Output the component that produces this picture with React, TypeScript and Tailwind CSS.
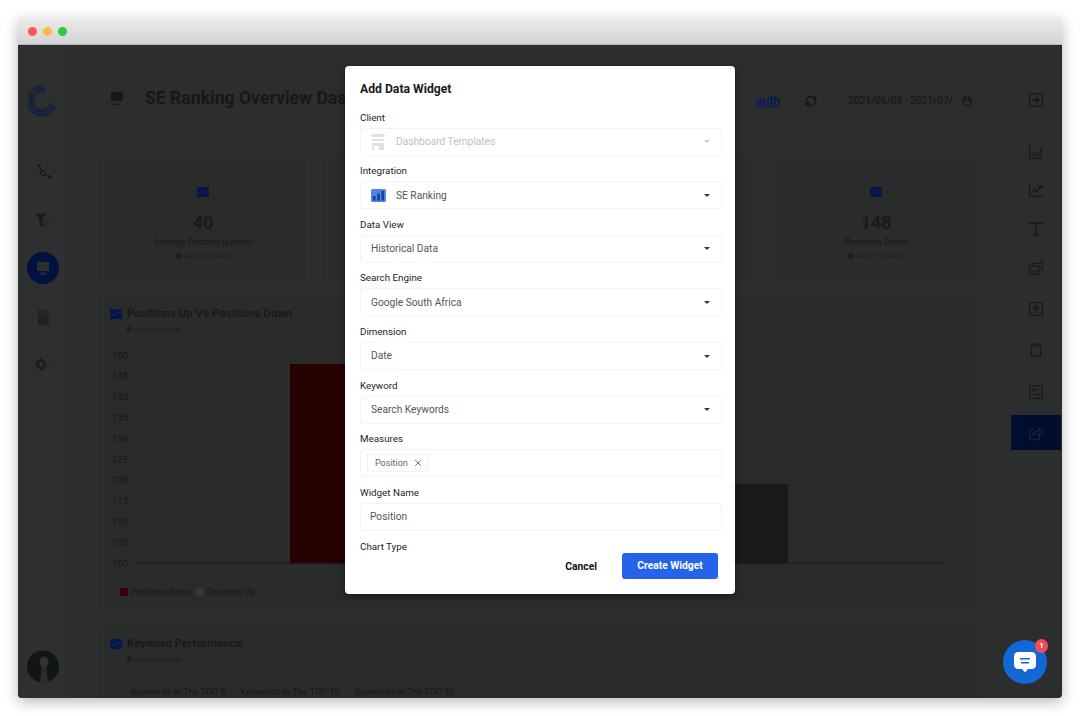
import React from "react";
import { Calendar, ChevronDown, Globe, RefreshCw, X } from "lucide-react";

const cards = [
  { value: "40", label: "Average Position (Latest)" },
  { value: "", label: "" },
  { value: "", label: "" },
  { value: "148", label: "Positions Down" },
];

const fields = [
  { label: "Client", value: "Dashboard Templates", icon: "client", disabled: true },
  { label: "Integration", value: "SE Ranking", icon: "se" },
  { label: "Data View", value: "Historical Data" },
  { label: "Search Engine", value: "Google South Africa" },
  { label: "Dimension", value: "Date" },
  { label: "Keyword", value: "Search Keywords" },
];

const yLabels = [150, 145, 140, 135, 130, 125, 120, 115, 110, 105, 100];

const Last30 = () => (
  <div className="flex items-center gap-[2px] text-[6px] leading-[7px] font-medium tracking-[0.11em] text-[#1c1d1d]">
    <Globe size={6} strokeWidth={3} />
    <span>LAST 30 DAYS</span>
  </div>
);

// concentric arcs, open on the right
const Logo = () => {
  const arc = (r: number, a: number, b: number) => {
    const p = (d: number) => {
      const t = (d * Math.PI) / 180;
      return `${14 + r * Math.cos(t)} ${16 + r * Math.sin(t)}`;
    };
    return `M${p(a)}A${r} ${r} 0 1 0 ${p(b)}`;
  };
  return (
    <svg width="30" height="32" viewBox="0 0 30 32" fill="none" stroke="#041547" strokeWidth="1">
      <path d={arc(15, -82, 24)} />
      <path d={arc(13, -78, 22)} />
      <path d={arc(11, -74, 18)} />
      <path d={arc(9, -70, 10)} />
    </svg>
  );
};

const ImgIcon = () => (
  <svg width="12" height="10" viewBox="0 0 12 10" className="shrink-0">
    <rect width="12" height="10" fill="#03164f" />
    <path d="M0 8L3 5L5 6.5L8.5 3L12 5" fill="none" stroke="#2a2c30" strokeWidth="0.8" />
  </svg>
);

const SeIcon = () => (
  <svg width="15" height="13" viewBox="0 0 15 13">
    <rect width="15" height="13" rx="1.5" fill="#4f86ee" />
    <rect x="2" y="7" width="2.6" height="4.5" fill="#173f9c" />
    <rect x="6.2" y="4.5" width="2.6" height="7" fill="#173f9c" />
    <rect x="10.4" y="2" width="2.6" height="9.5" fill="#173f9c" />
  </svg>
);

const ClientIcon = () => (
  <svg width="14" height="16" viewBox="0 0 14 16" fill="#dfe1e3">
    <rect x="0" y="0" width="14" height="3" rx="1.5" />
    <rect x="1" y="5" width="12" height="2" />
    <rect x="1" y="9" width="12" height="7" />
    <rect x="3" y="12" width="5" height="4" fill="#fff" />
  </svg>
);

const Caret = ({ light }: { light?: boolean }) => (
  <span
    className={`w-0 h-0 border-x-[3px] border-x-transparent border-t-[3px] ${
      light ? "border-t-[#c4c6c8]" : "border-t-[#33373b]"
    }`}
  />
);

const ChatIcon = () => (
  <svg width="22" height="21" viewBox="0 0 22 21">
    <path d="M4 0H18C20.2 0 22 1.8 22 4V13C22 15.2 20.2 17 18 17H14L11 20.5L8 17H4C1.8 17 0 15.2 0 13V4C0 1.8 1.8 0 4 0Z" fill="#fff" />
    <rect x="6" y="6" width="10" height="1.5" fill="#1367d6" />
    <rect x="7" y="10" width="8" height="1.5" fill="#1367d6" />
  </svg>
);

const Avatar = () => (
  <svg width="32" height="33" viewBox="0 0 32 33">
    <circle cx="16" cy="16.5" r="16" fill="#111518" />
    <ellipse cx="17" cy="12" rx="4.5" ry="5.5" fill="#2f3133" />
    <path d="M13 33L14.5 17H19.5L21 33Z" fill="#2a2c2e" />
    <path d="M16 18H18L17 22Z" fill="#5a1414" />
  </svg>
);

const MonitorIcon = ({ color, back }: { color: string; back?: string }) => (
  <svg width="14" height="13" viewBox="0 0 14 13">
    <rect x="1" y="0" width="12" height="9" fill={color} />
    <path d="M7 9.5L11 12.5H3Z" fill={back ? color : "none"} stroke={back ? "none" : color} strokeWidth="0.8" />
  </svg>
);

const HubIcon = () => (
  <svg width="18" height="18" viewBox="0 0 18 18" fill="none" stroke="#1b1c1c" strokeWidth="1.4">
    <circle cx="9" cy="10" r="2.4" />
    <path d="M7.8 7.8L5 2.5M11.2 11.3L15 13.5" />
    <circle cx="15.5" cy="14" r="1.2" fill="#1b1c1c" />
    <circle cx="5" cy="2.5" r="0.9" fill="#1b1c1c" />
    <path d="M1 8L3 9.3M14 4.5L12 6" strokeWidth="0.8" />
  </svg>
);

const FunnelIcon = () => (
  <svg width="16" height="16" viewBox="0 0 16 16">
    <path d="M0 0.5H11.5L7.5 6V14.5L4.5 12.5V6Z" fill="#1b1c1c" />
    <circle cx="11.5" cy="10.5" r="3.6" fill="none" stroke="#202121" strokeWidth="1.2" strokeDasharray="1 1" />
    <circle cx="11.5" cy="10.5" r="1.5" fill="#202121" />
  </svg>
);

const ReportIcon = () => (
  <svg width="12" height="17" viewBox="0 0 12 17">
    <path d="M1 0H8L12 4V17H1Z" fill="#242525" />
    <path d="M3 14V10M6 14V7M9 14V9" stroke="#1a1b1b" strokeWidth="1.6" />
  </svg>
);

const GearIcon = () => (
  <svg width="16" height="13" viewBox="0 0 16 13">
    <circle cx="6" cy="6.5" r="3.4" fill="none" stroke="#1b1c1c" strokeWidth="2.4" />
    <path d="M6 0V2M6 11V13M0 6.5H2M10 6.5H12M2 2.5L3.4 3.9M8.6 9.1L10 10.5M2 10.5L3.4 9.1M8.6 3.9L10 2.5" stroke="#1b1c1c" strokeWidth="1.8" />
    <circle cx="14" cy="3" r="1.4" fill="none" stroke="#242525" strokeWidth="1" strokeDasharray="1 1" />
    <circle cx="14" cy="10" r="1.4" fill="none" stroke="#242525" strokeWidth="1" strokeDasharray="1 1" />
  </svg>
);

const Tool = ({ children, className }: { children: React.ReactNode; className?: string }) => (
  <svg
    width="14"
    height="14"
    viewBox="0 0 14 14"
    fill="none"
    stroke="currentColor"
    strokeWidth="1.1"
    className={`block ${className ?? ""}`}
  >
    {children}
  </svg>
);

const Chart = () => (
  <svg width="881" height="232" viewBox="0 0 881 232" className="block" fontFamily="Roboto, sans-serif">
    {yLabels.map((n, i) => {
      const y = 8 + i * 20.8;
      return (
        <g key={n}>
          <text x="29" y={y + 3.5} fontSize="9.5" textAnchor="end" fill="#17181a">
            {n}
          </text>
          {i < 10 && <line x1="35" x2="845" y1={y} y2={y} stroke="#232424" strokeWidth="0.6" strokeDasharray="1 2" />}
        </g>
      );
    })}
    <rect x="191" y="17" width="120" height="199.5" fill="#270000" />
    <rect x="620" y="137" width="69" height="79.5" fill="#191a1a" />
    <line x1="35" x2="845" y1="216" y2="216" stroke="#161717" strokeWidth="1" />
  </svg>
);

const App = () => {
  return (
    <div className="w-[1080px] h-[716px] bg-white pt-[18px] px-[18px] overflow-hidden font-['Roboto',sans-serif]">
      <div className="relative w-[1044px] h-[680px] rounded-[4px] overflow-hidden flex flex-col shadow-[0_4px_14px_rgba(0,0,0,0.28)]">
        <div className="h-[27px] shrink-0 flex items-center gap-[6px] pl-[10px] bg-gradient-to-b from-[#ececec] to-[#d4d4d4] border-b border-[#b8b8b8]">
          <span className="w-[9px] h-[9px] rounded-full bg-[#fc5753]" />
          <span className="w-[9px] h-[9px] rounded-full bg-[#fdbc40]" />
          <span className="w-[9px] h-[9px] rounded-full bg-[#33c748]" />
        </div>

        <div className="flex-1 flex min-h-0 bg-[#2c2d2d] text-[#17181a]">
          {/* left nav */}
          <div className="w-[50px] shrink-0 bg-[#2e3030] flex flex-col items-center pt-[40px] pb-[15px]">
            <Logo />
            <div className="mt-[39px] flex flex-col items-center">
              <div className="w-[32px] h-[32px] flex items-center justify-center"><HubIcon /></div>
              <div className="mt-[17px] w-[32px] h-[32px] flex items-center justify-center"><FunnelIcon /></div>
              <div className="mt-[15px] w-[32px] h-[32px] rounded-full bg-[#021240] flex items-center justify-center"><MonitorIcon color="#2d2e2e" back="#021240" /></div>
              <div className="mt-[17px] w-[32px] h-[32px] flex items-center justify-center"><ReportIcon /></div>
              <div className="mt-[15px] w-[32px] h-[32px] flex items-center justify-center"><GearIcon /></div>
            </div>
            <div className="mt-auto"><Avatar /></div>
          </div>

          {/* main */}
          <div className="flex-1 min-w-0 overflow-hidden pl-[31px] pr-[30px] pt-[43px] bg-[#2c2d2d]">
            <div className="h-[25px] flex items-center justify-between">
              <div className="flex items-center pl-[11px] mb-[5px]">
                <MonitorIcon color="#17181a" />
                <span className="ml-[21px] text-[17.6px] font-bold leading-[20px] whitespace-nowrap">SE Ranking Overview Dashboard</span>
              </div>
              <div className="flex items-center">
                <a className="text-[12px] font-bold underline text-[#041a5c]">auth</a>
                <div className="ml-[12px] w-[38px] h-[25px] bg-[#2b2c2c] flex items-center justify-center"><RefreshCw size={12} strokeWidth={2.8} color="#141515" /></div>
                <div className="ml-[7px] w-[143px] h-[25px] bg-[#2b2c2c] flex items-center pl-[11px] pr-[8px] gap-[9px]">
                  <span className="flex-1 overflow-hidden whitespace-nowrap text-[10.2px] text-[#141515]">2021/06/08 - 2021/07/08</span>
                  <Calendar size={10} strokeWidth={2.2} color="#141515" className="shrink-0" />
                </div>
              </div>
            </div>

            <div className="mt-[42px] grid grid-cols-4 gap-x-[16px]">
              {cards.map((c, i) => (
                <div key={i} className="h-[126px] bg-[#2a2b2b] flex flex-col items-center pt-[32px]">
                  {c.value && (
                    <>
                      <ImgIcon />
                      <div className="mt-[16px] text-[18px] font-bold leading-[20px] text-[#191a1a]">{c.value}</div>
                      <div className="mt-[3px] text-[8.9px] leading-[12px] text-[#17181a]">{c.label}</div>
                      <div className="mt-[4px]"><Last30 /></div>
                    </>
                  )}
                </div>
              ))}
            </div>

            <div className="mt-[14px] h-[315px] bg-[#2a2b2b]">
              <div className="flex items-center pl-[11px] pt-[12px] h-[26px]">
                <ImgIcon />
                <span className="ml-[5px] text-[11.6px] font-medium leading-none text-[#161717]">Positions Up Vs Positions Down</span>
              </div>
              <div className="pl-[27px] mt-[2px] h-[12px] flex items-center"><Last30 /></div>
              <div className="mt-[12px]"><Chart /></div>
              <div className="mt-[7px] pl-[21px] flex items-center text-[8.6px] leading-[12px] text-[#161717]">
                <span className="w-[8px] h-[8px] bg-[#3a0303]" />
                <span className="ml-[3px]">Positions Down</span>
                <span className="ml-[5px] w-[8px] h-[8px] bg-[#363737]" />
                <span className="ml-[3px]">Positions Up</span>
              </div>
            </div>

            <div className="mt-[15px] h-[100px] bg-[#2a2b2b]">
              <div className="flex items-center pl-[11px] pt-[12px] h-[26px]">
                <ImgIcon />
                <span className="ml-[5px] text-[11.6px] font-medium leading-none text-[#161717]">Keyword Performance</span>
              </div>
              <div className="pl-[27px] mt-[2px] h-[12px] flex items-center"><Last30 /></div>
              <div className="mt-[21px] pl-[32px] flex items-center text-[9.2px] leading-[12px] text-[#161717]">
                <span>Keywords In The TOP 5</span>
                <ChevronDown size={8} color="#06206e" className="ml-[1px]" />
                <span className="ml-[6px]">Keywords In The TOP 10</span>
                <span className="ml-[15px]">Keywords In The TOP 30</span>
              </div>
            </div>
          </div>

          {/* right tools */}
          <div className="w-[52px] shrink-0 flex flex-col items-center text-[#171818] pt-[48px]">
            <Tool>
              <rect x="0.6" y="0.6" width="12.8" height="12.8" />
              <path d="M3 7H10M7 4L10 7L7 10" strokeWidth="1.5" />
            </Tool>
            <Tool className="mt-[38px]">
              <path d="M0.6 0.5V13.4H13.5" />
              <path d="M3.5 11.5V8M6.2 11.5V5.5M9 11.5V7M11.8 11.5V2.5" strokeWidth="1.2" />
            </Tool>
            <Tool className="mt-[24px]">
              <path d="M0.6 0.5V13.4H13.5" />
              <path d="M2.5 10L5.5 6.5L8 8.5L12.5 3M10 3H12.8V5.5" strokeWidth="1.3" />
            </Tool>
            <Tool className="mt-[25px]">
              <path d="M0.7 3V1H13.3V3M7 1V13M4.5 13H9.5" strokeWidth="1.5" />
            </Tool>
            <Tool className="mt-[25px]">
              <rect x="0.6" y="5" width="9.5" height="8" />
              <path d="M3 5V2.5H12M13.4 1V8H10.5M9.5 0.6H13.4" />
              <path d="M1.5 12L4 9L6 11L7.5 9.5L9.5 12" strokeWidth="1" />
            </Tool>
            <Tool className="mt-[26.5px]">
              <rect x="0.6" y="0.6" width="12.8" height="12.8" />
              <path d="M7 11V4M4 7L7 4L10 7" strokeWidth="1.5" />
            </Tool>
            <Tool className="mt-[27.5px]">
              <path d="M1 3H13M4 3L4.8 0.8H9.2L10 3M2 3L2.8 13.4H11.2L12 3" strokeWidth="1.2" />
            </Tool>
            <Tool className="mt-[28px]">
              <rect x="0.6" y="0.6" width="12.8" height="12.8" />
              <path d="M3 5H10M5 3L3 5L5 7M4 9.5H11M9 7.5L11 9.5L9 11.5" strokeWidth="0.9" />
            </Tool>
            <div className="mt-[16px] w-[50px] h-[35px] bg-[#010d2e] flex items-center justify-center text-[#1c2230]">
              <Tool>
                <path d="M5 2.5H0.8V13.4H10.5V9" />
                <path d="M3.5 10C4 6.5 6.5 5 9.5 5V2L13.4 6L9.5 10V7.5C7 7.5 5 8 3.5 10Z" />
              </Tool>
            </div>
          </div>
        </div>

        {/* add data widget modal */}
        <div className="absolute left-[327px] top-[48px] w-[390px] h-[528px] bg-white rounded-[4px] flex flex-col text-[#1f2328] shadow-[0_2px_8px_rgba(0,0,0,0.4)]">
          <div className="h-[42.5px] shrink-0 pl-[15px] pt-[16px] text-[12.2px] font-bold leading-[15px] text-[#181a1d]">Add Data Widget</div>
          <div className="flex-1 min-h-0 overflow-hidden pl-[15px] pr-[13px]">
            {fields.map((f) => (
              <div key={f.label} className="h-[53.67px]">
                <div className="h-[19px] text-[9.8px] leading-[18px]">{f.label}</div>
                <div className="h-[28px] border border-[#eef4fb] rounded-[4px] flex items-center pl-[10px] pr-[11px] text-[10.2px]">
                  {f.icon === "se" && <span className="mr-[10px] flex"><SeIcon /></span>}
                  {f.icon === "client" && <span className="mr-[11px] flex"><ClientIcon /></span>}
                  <span className={f.disabled ? "text-[#bfc1c4]" : "text-[#52565c]"}>{f.value}</span>
                  <span className="ml-auto flex"><Caret light={f.disabled} /></span>
                </div>
              </div>
            ))}
            <div className="h-[53.67px]">
              <div className="h-[19px] text-[9.8px] leading-[18px]">Measures</div>
              <div className="h-[28px] border border-[#eef4fb] rounded-[4px] flex items-center pl-[6px]">
                <div className="h-[18px] w-[61px] border border-[#eef4fb] rounded-[2px] flex items-center pl-[7px] text-[9px] text-[#63676c]">
                  Position
                  <X size={10} strokeWidth={2} className="ml-[5px] text-[#4a4e53]" />
                </div>
              </div>
            </div>
            <div className="h-[53.67px]">
              <div className="h-[19px] text-[9.8px] leading-[18px]">Widget Name</div>
              <div className="h-[28px] border border-[#eef4fb] rounded-[4px] flex items-center pl-[9px] text-[10.2px] text-[#52565c]">Position</div>
            </div>
            <div className="h-[19px] text-[9.8px] leading-[18px]">Chart Type</div>
          </div>
          <div className="h-[41px] shrink-0 flex items-start justify-end pr-[17px]">
            <button className="text-[10.3px] font-bold leading-[27px] text-[#111]">Cancel</button>
            <button className="ml-[25px] w-[96px] h-[26px] bg-[#2563eb] rounded-[3px] text-[10.3px] font-bold text-white">Create Widget</button>
          </div>
        </div>

        {/* chat bubble */}
        <div className="absolute left-[985px] top-[622px] w-[44px] h-[44px] rounded-full bg-[#1367d6] flex items-center justify-center">
          <ChatIcon />
          <span className="absolute -right-[1px] -top-[1px] w-[13px] h-[14px] rounded-full bg-[#ef4d56] text-[8px] font-bold leading-[14px] text-center text-white">1</span>
        </div>
      </div>
    </div>
  );
};

export default App;
